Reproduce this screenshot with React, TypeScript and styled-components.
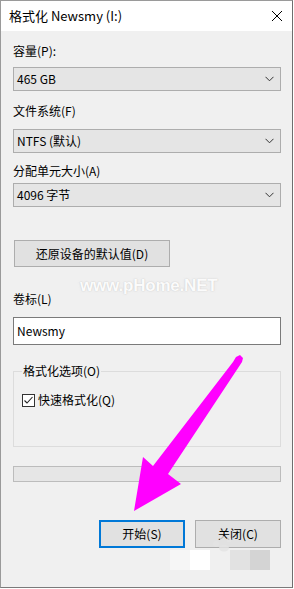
import styled, { createGlobalStyle } from "styled-components";

const Global = createGlobalStyle`
  html, body {
    margin: 0;
    padding: 0;
    background: #ffffff;
  }
  body {
    font-family: "Noto Sans CJK SC", "Noto Sans", sans-serif;
    font-size: 12px;
    color: #000;
  }
`;

const Window = styled.div`
  position: relative;
  width: 293px;
  height: 588px;
  box-sizing: border-box;
  border: 1px solid #9a9a9a;
  border-right-color: #6e6e6e;
  border-bottom-color: #7a7a7a;
  background: #f0f0f0;
  display: flex;
  flex-direction: column;
  overflow: hidden;
`;

const TitleBar = styled.div`
  height: 30px;
  background: #ffffff;
  display: flex;
  align-items: center;
  justify-content: space-between;
  padding: 0 9px 0 8px;
`;

const Title = styled.div`
  font-size: 13px;
  line-height: 16px;
  margin-top: -1px;
`;

const Body = styled.div`
  display: flex;
  flex-direction: column;
  padding: 12px 11px 0 12px;
`;

const Label = styled.div<{ $mt?: number; $mb?: number }>`
  line-height: 16px;
  margin-top: ${(p) => p.$mt ?? 0}px;
  margin-bottom: ${(p) => p.$mb ?? 8}px;
`;

const Select = styled.div`
  height: 24px;
  box-sizing: border-box;
  border: 1px solid #adadad;
  background: #e5e5e5;
  display: flex;
  align-items: center;
  justify-content: space-between;
  padding: 0 6px 0 3px;
  line-height: 16px;
`;

const Button = styled.div<{ $primary?: boolean; $w: number }>`
  width: ${(p) => p.$w}px;
  height: 28px;
  box-sizing: border-box;
  border: ${(p) => (p.$primary ? "2px solid #0078d7" : "1px solid #adadad")};
  background: #e1e1e1;
  display: flex;
  align-items: center;
  justify-content: center;
  line-height: 16px;
`;

const ResetButton = styled(Button)`
  margin-top: 33px;
  margin-left: 1px;
  height: 27px;
`;

const TextBox = styled.div`
  height: 28px;
  box-sizing: border-box;
  border: 1px solid #7a7a7a;
  background: #ffffff;
  display: flex;
  align-items: center;
  padding: 0 3px;
  line-height: 16px;
`;

const Group = styled.fieldset`
  margin: 18px 0 0 0;
  padding: 13px 8px 0 8px;
  height: 84px;
  box-sizing: border-box;
  border: 1px solid #dcdcdc;
  border-radius: 0;
  min-width: 0;
`;

const Legend = styled.legend`
  padding: 0 1px;
  margin-left: 0;
  line-height: 16px;
`;

const CheckRow = styled.label`
  display: flex;
  align-items: center;
  gap: 3px;
  line-height: 16px;
`;

const Box = styled.span`
  width: 13px;
  height: 13px;
  box-sizing: border-box;
  border: 1px solid #333;
  background: #fff;
  display: flex;
  align-items: center;
  justify-content: center;
`;

const Progress = styled.div`
  margin-top: 19px;
  height: 16px;
  box-sizing: border-box;
  border: 1px solid #bcbcbc;
  background: #e6e6e6;
`;

const Footer = styled.div`
  display: flex;
  justify-content: flex-end;
  gap: 10px;
  margin-top: 38px;
`;

const Overlay = styled.svg`
  position: absolute;
  left: -1px;
  top: -1px;
  pointer-events: none;
`;

const Watermark = styled.div`
  position: absolute;
  left: 79px;
  top: 275px;
  font-family: "Liberation Sans", Arial, sans-serif;
  font-weight: 900;
  font-size: 17px;
  letter-spacing: -0.2px;
  color: rgba(255, 255, 255, 0.95);
  text-shadow: 0 0 1px rgba(190, 190, 190, 0.8), 0 0 2px rgba(210, 210, 210, 0.6);
  pointer-events: none;
`;

const Chevron = () => (
  <svg width="9" height="6" viewBox="0 0 9 6">
    <polyline points="0.5,0.8 4.5,4.8 8.5,0.8" fill="none" stroke="#333" strokeWidth="1" />
  </svg>
);

const Close = () => (
  <svg width="12" height="12" viewBox="0 0 12 12">
    <path d="M1 1 L11 11 M11 1 L1 11" stroke="#000" strokeWidth="1" />
  </svg>
);

export default function App() {
  return (
    <>
      <Global />
      <Window>
        <TitleBar>
          <Title>格式化 Newsmy (I:)</Title>
          <Close />
        </TitleBar>
        <Body>
          <Label>容量(P):</Label>
          <Select>
            <span>465 GB</span>
            <Chevron />
          </Select>
          <Label $mt={12} $mb={10}>文件系统(F)</Label>
          <Select>
            <span>NTFS (默认)</span>
            <Chevron />
          </Select>
          <Label $mt={10} $mb={4}>分配单元大小(A)</Label>
          <Select>
            <span>4096 字节</span>
            <Chevron />
          </Select>
          <ResetButton $w={156}>还原设备的默认值(D)</ResetButton>
          <Label $mt={24} $mb={10}>卷标(L)</Label>
          <TextBox>Newsmy</TextBox>
          <Group>
            <Legend>格式化选项(O)</Legend>
            <CheckRow>
              <Box>
                <svg width="11" height="11" viewBox="0 0 11 11">
                  <polyline points="1.5,5.5 4,8 9.5,2" fill="none" stroke="#222" strokeWidth="1.1" />
                </svg>
              </Box>
              快速格式化(Q)
            </CheckRow>
          </Group>
          <Progress />
          <Footer>
            <Button $primary $w={86}>开始(S)</Button>
            <Button $w={86}>关闭(C)</Button>
          </Footer>
        </Body>
        <Watermark>www.pHome.NET</Watermark>
        <Overlay width="294" height="589" viewBox="0 0 294 589">
          <rect x="170" y="550" width="20" height="20" fill="#f6f6f6" />
          <rect x="190" y="550" width="20" height="20" fill="#ffffff" />
          <rect x="230" y="550" width="20" height="20" fill="#e2e2e2" />
          <rect x="250" y="550" width="20" height="20" fill="#d4d4d4" />
          <g fill="#e4e4e4" opacity="0.8">
            <circle cx="216" cy="544" r="3" />
            <circle cx="222" cy="538" r="2.5" />
            <circle cx="229" cy="540" r="2.5" />
            <ellipse cx="224" cy="548" rx="5" ry="3.5" />
          </g>
          <polygon
            points="233,362 236,357 240,355 243,358 242,362 168,474 181,484 134,511 143,457 153,466"
            fill="#ff00ff"
          />
        </Overlay>
      </Window>
    </>
  );
}
